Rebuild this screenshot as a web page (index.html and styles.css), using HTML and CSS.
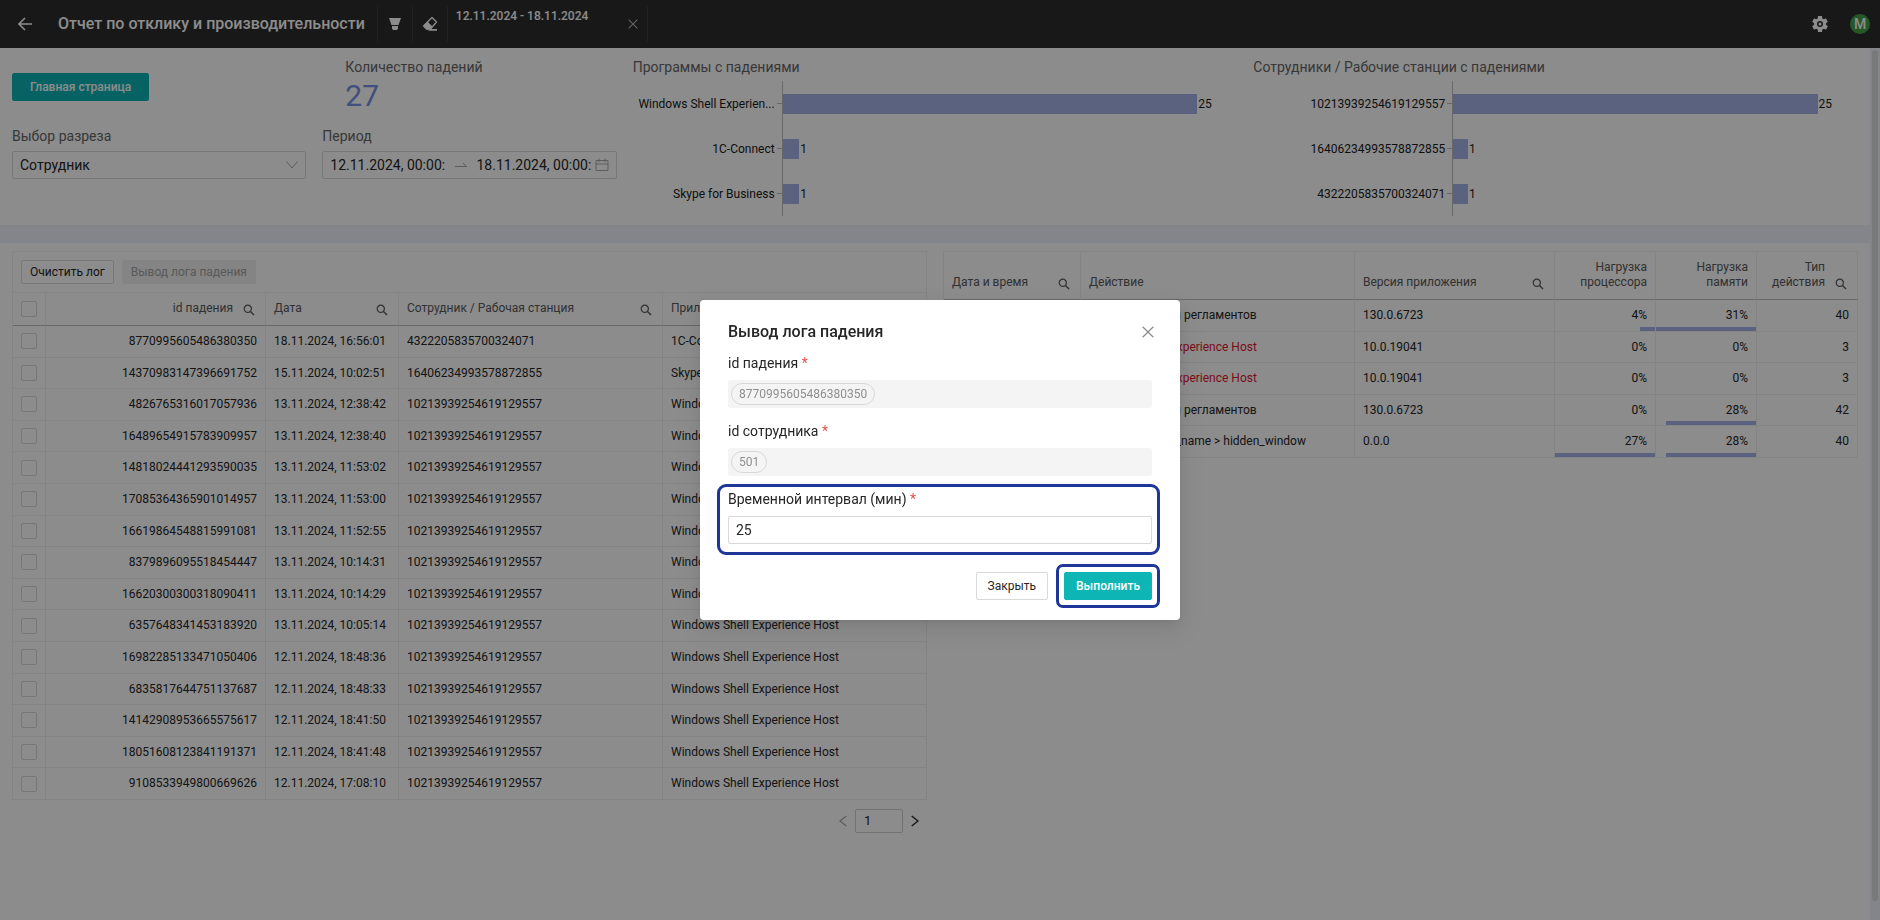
FILE: index.html
```html
<!DOCTYPE html>
<html lang="ru">
<head>
<meta charset="utf-8">
<title>Отчет по отклику и производительности</title>
<link rel="stylesheet" href="styles.css">
</head>
<body>
<svg class="sprite" aria-hidden="true">
  <symbol id="search" viewBox="0 0 12 12"><circle cx="4.8" cy="4.8" r="3.6" fill="none" stroke="currentColor" stroke-width="1.2"/><path d="M7.5 7.5 11 11" stroke="currentColor" stroke-width="1.4"/></symbol>
  <symbol id="close" viewBox="0 0 12 12"><path d="M.7.7 11.3 11.3M11.3.7.7 11.3" stroke="currentColor" stroke-width="1.3"/></symbol>
</svg>

<div class="app">
  <header class="topbar">
    <button class="icon-button back" aria-label="Назад"><svg width="14" height="14" viewBox="0 0 14 14"><path d="M7 1 1 7l6 6M1 7h13" fill="none" stroke="currentColor" stroke-width="1.6"/></svg></button>
    <h1 class="topbar-title">Отчет по отклику и производительности</h1>
    <div class="topbar-cell"><button class="icon-button" aria-label="Фильтр"><svg width="14" height="14" viewBox="0 0 14 14"><path d="M1 1h12L10.500 8h-7zM4 9h6v2.500L9 13H5l-1-1.500z" fill="currentColor"/></svg></button></div>
    <div class="topbar-cell"><button class="icon-button" aria-label="Сбросить"><svg width="16" height="16" viewBox="0 0 16 16"><path d="M10 1.500 14.500 6 8.500 13H4.500L1.500 10z" fill="none" stroke="currentColor" stroke-width="1.300" stroke-linejoin="round"/><path d="M5.500 5.500 10.500 10.500 8.500 13.500H4.500L1.500 10zM8 13h7v1.800H6z" fill="currentColor"/></svg></button></div>
    <div class="topbar-cell chip"><span class="chip-text">12.11.2024 - 18.11.2024</span><button class="icon-button chip-close" aria-label="Убрать фильтр"><svg width="10" height="10"><use href="#close"/></svg></button></div>
    <div class="topbar-right">
      <button class="icon-button" aria-label="Настройки"><svg width="20" height="20" viewBox="0 0 24 24"><path fill="currentColor" fill-rule="evenodd" d="M19.140 12.940c.04-.3.060-.61.060-.94s-.02-.64-.07-.94l2.030-1.580a.49.49 0 0 0 .12-.61l-1.920-3.320a.49.49 0 0 0-.59-.22l-2.390.96a7 7 0 0 0-1.620-.94l-.36-2.540A.48.48 0 0 0 13.920 2.400h-3.840a.48.48 0 0 0-.47.41l-.36 2.540a7 7 0 0 0-1.620.94l-2.390-.96a.48.48 0 0 0-.59.22L2.740 8.870a.48.48 0 0 0 .12.61l2.030 1.580a6 6 0 0 0 0 1.880l-2.030 1.580a.49.49 0 0 0-.12.61l1.920 3.320c.12.22.37.29.59.22l2.390-.96c.5.38 1.030.7 1.620.94l.36 2.540c.05.24.24.41.48.41h3.840c.24 0 .44-.17.47-.41l.36-2.540a7 7 0 0 0 1.620-.94l2.390.96c.22.08.47 0 .59-.22l1.920-3.320a.48.48 0 0 0-.12-.61zM12 15.600a3.600 3.600 0 1 1 0-7.200 3.600 3.600 0 0 1 0 7.200z"/><circle cx="12" cy="12" r="1.800" fill="currentColor"/></svg></button>
      <span class="avatar">M</span>
    </div>
  </header>

  <div class="body">
    <main class="content">
      <section class="panel summary">
        <div class="controls">
          <div class="home"><button class="button primary">Главная страница</button></div>
          <div class="metric"><div class="caption">Количество падений</div><div class="metric-value">27</div></div>
          <div class="control">
            <label class="caption" for="slice">Выбор разреза</label>
            <div class="box"><select id="slice" class="bare"><option>Сотрудник</option></select><svg class="chevron" width="12" height="8" viewBox="0 0 12 8"><path d="M.5.5 6 7 11.500.5" fill="none" stroke="currentColor"/></svg></div>
          </div>
          <div class="control">
            <label class="caption" for="from">Период</label>
            <div class="box">
              <input id="from" class="bare" value="12.11.2024, 00:00:00">
              <svg class="range-arrow" width="12" height="6" viewBox="0 0 12 6"><path d="M0 4.500h11.500L8 1" fill="none" stroke="currentColor"/></svg>
              <input class="bare" aria-label="Конец периода" value="18.11.2024, 00:00:00">
              <svg class="calendar" width="14" height="14" viewBox="0 0 14 14"><path d="M1 2.500h12v10H1zM1 6h12M4 .5v3.500M10 .5v3.500" fill="none" stroke="currentColor"/></svg>
            </div>
          </div>
        </div>
        <div class="chart">
          <div class="caption">Программы с падениями</div>
          <div class="bars wide">
            <span class="bar-label">Windows Shell Experien...</span><div class="bar-track"><i class="bar" style="width:91.2%"></i><span>25</span></div>
            <span class="bar-label">1C-Connect</span><div class="bar-track"><i class="bar" style="width:3.65%"></i><span>1</span></div>
            <span class="bar-label">Skype for Business</span><div class="bar-track"><i class="bar" style="width:3.65%"></i><span>1</span></div>
          </div>
        </div>
        <div class="chart">
          <div class="caption">Сотрудники / Рабочие станции с падениями</div>
          <div class="bars narrow">
            <span class="bar-label">10213939254619129557</span><div class="bar-track"><i class="bar" style="width:90%"></i><span>25</span></div>
            <span class="bar-label">16406234993578872855</span><div class="bar-track"><i class="bar" style="width:3.6%"></i><span>1</span></div>
            <span class="bar-label">4322205835700324071</span><div class="bar-track"><i class="bar" style="width:3.6%"></i><span>1</span></div>
          </div>
        </div>
      </section>

      <section class="panel logs">
        <div>
          <div class="toolbar"><button class="button small">Очистить лог</button><button class="button small" disabled>Вывод лога падения</button></div>
          <table class="grid">
            <colgroup><col class="w-check"><col class="w-id"><col class="w-date"><col><col></colgroup>
            <thead><tr>
              <th><input type="checkbox" aria-label="Выбрать все"></th>
              <th class="num"><div class="head"><span>id падения</span><svg width="12" height="12"><use href="#search"/></svg></div></th>
              <th><div class="head"><span>Дата</span><svg width="12" height="12"><use href="#search"/></svg></div></th>
              <th><div class="head"><span>Сотрудник / Рабочая станция</span><svg width="12" height="12"><use href="#search"/></svg></div></th>
              <th><div class="head"><span>Приложение</span></div></th>
            </tr></thead>
            <tbody>
              <tr><td><input type="checkbox" aria-label="Выбрать"></td><td class="num">8770995605486380350</td><td>18.11.2024, 16:56:01</td><td>4322205835700324071</td><td>1C-Connect</td></tr>
              <tr><td><input type="checkbox" aria-label="Выбрать"></td><td class="num">14370983147396691752</td><td>15.11.2024, 10:02:51</td><td>16406234993578872855</td><td>Skype for Business</td></tr>
              <tr><td><input type="checkbox" aria-label="Выбрать"></td><td class="num">4826765316017057936</td><td>13.11.2024, 12:38:42</td><td>10213939254619129557</td><td>Windows Shell Experience Host</td></tr>
              <tr><td><input type="checkbox" aria-label="Выбрать"></td><td class="num">16489654915783909957</td><td>13.11.2024, 12:38:40</td><td>10213939254619129557</td><td>Windows Shell Experience Host</td></tr>
              <tr><td><input type="checkbox" aria-label="Выбрать"></td><td class="num">14818024441293590035</td><td>13.11.2024, 11:53:02</td><td>10213939254619129557</td><td>Windows Shell Experience Host</td></tr>
              <tr><td><input type="checkbox" aria-label="Выбрать"></td><td class="num">17085364365901014957</td><td>13.11.2024, 11:53:00</td><td>10213939254619129557</td><td>Windows Shell Experience Host</td></tr>
              <tr><td><input type="checkbox" aria-label="Выбрать"></td><td class="num">16619864548815991081</td><td>13.11.2024, 11:52:55</td><td>10213939254619129557</td><td>Windows Shell Experience Host</td></tr>
              <tr><td><input type="checkbox" aria-label="Выбрать"></td><td class="num">8379896095518454447</td><td>13.11.2024, 10:14:31</td><td>10213939254619129557</td><td>Windows Shell Experience Host</td></tr>
              <tr><td><input type="checkbox" aria-label="Выбрать"></td><td class="num">16620300300318090411</td><td>13.11.2024, 10:14:29</td><td>10213939254619129557</td><td>Windows Shell Experience Host</td></tr>
              <tr><td><input type="checkbox" aria-label="Выбрать"></td><td class="num">6357648341453183920</td><td>13.11.2024, 10:05:14</td><td>10213939254619129557</td><td>Windows Shell Experience Host</td></tr>
              <tr><td><input type="checkbox" aria-label="Выбрать"></td><td class="num">16982285133471050406</td><td>12.11.2024, 18:48:36</td><td>10213939254619129557</td><td>Windows Shell Experience Host</td></tr>
              <tr><td><input type="checkbox" aria-label="Выбрать"></td><td class="num">6835817644751137687</td><td>12.11.2024, 18:48:33</td><td>10213939254619129557</td><td>Windows Shell Experience Host</td></tr>
              <tr><td><input type="checkbox" aria-label="Выбрать"></td><td class="num">14142908953665575617</td><td>12.11.2024, 18:41:50</td><td>10213939254619129557</td><td>Windows Shell Experience Host</td></tr>
              <tr><td><input type="checkbox" aria-label="Выбрать"></td><td class="num">18051608123841191371</td><td>12.11.2024, 18:41:48</td><td>10213939254619129557</td><td>Windows Shell Experience Host</td></tr>
              <tr><td><input type="checkbox" aria-label="Выбрать"></td><td class="num">9108533949800669626</td><td>12.11.2024, 17:08:10</td><td>10213939254619129557</td><td>Windows Shell Experience Host</td></tr>
            </tbody>
          </table>
          <nav class="pager">
            <button class="icon-button" aria-label="Предыдущая" disabled><svg width="8" height="12" viewBox="0 0 8 12"><path d="M7.300 1 1 6l6.300 5" fill="none" stroke="currentColor" stroke-width="1.200"/></svg></button>
            <input class="page" aria-label="Страница" value="1">
            <button class="icon-button" aria-label="Следующая"><svg width="8" height="12" viewBox="0 0 8 12"><path d="M.7 1 7 6 .7 11" fill="none" stroke="currentColor" stroke-width="1.400"/></svg></button>
          </nav>
        </div>
        <div>
          <table class="grid topped">
            <colgroup><col class="w-time"><col><col class="w-version"><col class="w-load"><col class="w-load"><col class="w-load"></colgroup>
            <thead><tr>
              <th><div class="head"><span>Дата и время</span><svg width="12" height="12"><use href="#search"/></svg></div></th>
              <th><div class="head"><span>Действие</span></div></th>
              <th><div class="head"><span>Версия приложения</span><svg width="12" height="12"><use href="#search"/></svg></div></th>
              <th class="num"><div class="head"><span>Нагрузка<br>процессора</span></div></th>
              <th class="num"><div class="head"><span>Нагрузка<br>памяти</span></div></th>
              <th class="num"><div class="head"><span>Тип<br>действия</span><svg width="12" height="12"><use href="#search"/></svg></div></th>
            </tr></thead>
            <tbody>
              <tr><td>18.11.2024, 16:56:01</td><td>Учет процесса и регламентов</td><td>130.0.6723</td><td class="num load" style="background-size:15% 4px">4%</td><td class="num load" style="background-size:100% 4px">31%</td><td class="num">40</td></tr>
              <tr><td>18.11.2024, 16:56:01</td><td class="alert">Windows Shell Experience Host</td><td>10.0.19041</td><td class="num">0%</td><td class="num">0%</td><td class="num">3</td></tr>
              <tr><td>18.11.2024, 16:56:01</td><td class="alert">Windows Shell Experience Host</td><td>10.0.19041</td><td class="num">0%</td><td class="num">0%</td><td class="num">3</td></tr>
              <tr><td>18.11.2024, 16:56:01</td><td>Учет процесса и регламентов</td><td>130.0.6723</td><td class="num">0%</td><td class="num load" style="background-size:90% 4px">28%</td><td class="num">42</td></tr>
              <tr><td>18.11.2024, 16:56:01</td><td>hidden_program_name &gt; hidden_window</td><td>0.0.0</td><td class="num load" style="background-size:100% 4px">27%</td><td class="num load" style="background-size:90% 4px">28%</td><td class="num">40</td></tr>
            </tbody>
          </table>
        </div>
      </section>
    </main>
    <div class="scrollbar"><div class="thumb"></div></div>
  </div>
</div>

<div class="mask">
  <form class="modal" role="dialog" aria-labelledby="modal-title">
    <div class="modal-head"><h2 id="modal-title">Вывод лога падения</h2><button type="button" class="icon-button modal-close" aria-label="Закрыть окно"><svg width="12" height="12"><use href="#close"/></svg></button></div>
    <div class="field"><span class="field-label">id падения <b>*</b></span><div class="tags"><span class="tag">8770995605486380350</span></div></div>
    <div class="field"><span class="field-label">id сотрудника <b>*</b></span><div class="tags"><span class="tag">501</span></div></div>
    <div class="field marked"><label class="field-label" for="interval">Временной интервал (мин) <b>*</b></label><input id="interval" class="text-input" value="25"></div>
    <div class="modal-foot"><button type="button" class="button">Закрыть</button><div class="marked-button"><button type="button" class="button primary">Выполнить</button></div></div>
  </form>
</div>
</body>
</html>
```
FILE: styles.css
```css
* { box-sizing: border-box; }
body {
  margin: 0;
  font: 12px/18px Roboto, sans-serif;
  color: #262626;
  background: #f1f3fb;
  overflow: hidden;
}
button, input, select { font: inherit; color: inherit; margin: 0; }
h1, h2 { margin: 0; font-size: 16px; font-weight: 500; line-height: 24px; }
svg { display: block; flex: none; }
.sprite { position: absolute; width: 0; height: 0; }
.app { display: flex; flex-direction: column; height: 100vh; }

.icon-button { display: flex; padding: 0; border: 0; background: none; }

/* Top bar */
.topbar {
  display: flex;
  align-items: center;
  height: 48px;
  flex: none;
  padding: 0 10px 0 18px;
  background: #2d2d2d;
  color: #fff;
}
.topbar-title { margin: 0 12px 0 26px; }
.topbar-cell {
  display: flex;
  align-items: center;
  justify-content: center;
  width: 35px;
  height: 36px;
  border-left: 1px solid #3d3d3d;
}
.chip {
  width: 201px;
  justify-content: space-between;
  padding: 0 9px 0 8px;
  border-right: 1px solid #3d3d3d;
}
.chip-text { align-self: flex-start; font-weight: 500; line-height: 20px; }
.chip-close { color: #b5b5b5; }
.topbar-right { display: flex; align-items: center; gap: 20px; margin-left: auto; }
.avatar {
  width: 20px;
  border-radius: 10px;
  background: #43a047;
  font-size: 14px;
  font-weight: 500;
  line-height: 20px;
  text-align: center;
}

/* Page */
.body { display: flex; flex: 1; min-height: 0; }
.content { display: flex; flex-direction: column; flex: 1; gap: 18px; min-width: 0; }
.scrollbar { width: 10px; padding: 2px; }
.thumb { height: 98%; width: 6px; border-radius: 3px; background: #dcdcdf; }
.panel { display: grid; column-gap: 16px; padding: 8px 12px; background: #fff; }
.summary { grid-template-columns: repeat(3, minmax(0, 1fr)); }
.logs { flex: 1; grid-template-columns: repeat(2, minmax(0, 1fr)); align-content: start; }
.caption { display: block; font-size: 14px; line-height: 22px; color: #666; }

.controls { display: grid; grid-template-columns: repeat(2, minmax(0, 1fr)); column-gap: 16px; align-content: start; }
.home { padding-top: 17px; }
.metric { height: 69px; padding-left: 23px; }
.metric-value { font-size: 30px; line-height: 36px; color: #7591e1; }
.box {
  display: flex;
  align-items: center;
  height: 28px;
  margin-top: 4px;
  padding: 0 7px;
  border: 1px solid #d9d9d9;
  border-radius: 2px;
}
.bare {
  flex: 1;
  min-width: 0;
  padding: 0;
  border: 0;
  appearance: none;
  background: none;
  font-size: 14px;
}
.chevron, .calendar, .range-arrow { color: #a8a8a8; }
.range-arrow { margin: 0 10px; }
.calendar { margin-left: 4px; }

.button {
  height: 28px;
  padding: 0 11px;
  border: 1px solid #d9d9d9;
  border-radius: 2px;
  background: #fff;
}
.primary { padding: 0 17px; border-color: #0db5b5; background: #0db5b5; color: #fff; font-weight: 500; }
.small { height: 24px; padding: 0 8px; }
.small:disabled { border-color: #f0f0f0; background: #f0f0f0; color: #a3a3a3; }

/* Bar charts */
.bars { display: grid; grid-auto-rows: 45px; margin: 3px 0 1px; color: #1a1a1a; }
.wide { grid-template-columns: 149px 1fr; }
.narrow { grid-template-columns: 199px 1fr; }
.bar-label { display: flex; align-items: center; justify-content: flex-end; gap: 2px; white-space: nowrap; }
.bar-label::after { content: ""; width: 5px; height: 1px; background: #bdbdbd; }
.bar-track { display: flex; align-items: center; gap: 1px; border-left: 1px solid #bdbdbd; }
.bar { height: 20px; background: #a4b2e8; }

/* Tables */
.toolbar {
  display: flex;
  gap: 8px;
  padding: 8px;
  border: 1px solid #f0f0f0;
  border-bottom: 0;
}
.grid {
  width: 100%;
  table-layout: fixed;
  border-spacing: 0;
  border: solid #f0f0f0;
  border-width: 1px 0 0 1px;
}
.grid th, .grid td {
  padding: 6px 8px;
  border: solid #f0f0f0;
  border-width: 0 1px 1px 0;
  line-height: 1.55;
  text-align: left;
  white-space: nowrap;
  overflow: hidden;
}
.grid th {
  padding: 7px 8px 9px;
  border-bottom-color: #bfbfbf;
  font-weight: 400;
  line-height: 15px;
  color: #595959;
  vertical-align: bottom;
}
.grid .num { text-align: right; }
.head { display: flex; justify-content: space-between; align-items: flex-end; gap: 10px; padding-right: 2px; }
.num .head { justify-content: flex-end; }
.num .head:not(:has(svg)) { padding-right: 0; }
.grid input {
  display: block;
  width: 16px;
  height: 16px;
  border: 1px solid #d9d9d9;
  border-radius: 2px;
  appearance: none;
  background: #fff;
}
.grid.topped th { padding-top: 8px; }
.grid th:has(input) { padding: 8px; }
.w-check { width: 33px; }
.w-id { width: 220px; }
.w-date { width: 133px; }
.w-time { width: 137px; }
.w-version { width: 200px; }
.w-load { width: 101px; }
.alert { color: #e0142d; }
.load { background: linear-gradient(#a4b2e8, #a4b2e8) right bottom no-repeat; background-origin: padding-box; }

.pager { display: flex; align-items: center; justify-content: flex-end; gap: 8px; padding: 9px 8px; }
.page { width: 48px; height: 24px; padding: 0 8px; border: 1px solid #cfcfcf; border-radius: 2px; background: #fff; font-size: 13px; }
.pager :disabled { color: #a8a8a8; }

/* Dialog */
.mask {
  position: fixed;
  inset: 0;
  display: flex;
  align-items: center;
  justify-content: center;
  background: rgba(0, 0, 0, .45);
}
.modal {
  width: 480px;
  padding: 20px 28px;
  border-radius: 4px;
  background: #fff;
  box-shadow: 0 3px 6px -4px rgba(0, 0, 0, .12), 0 6px 16px rgba(0, 0, 0, .08), 0 9px 28px 8px rgba(0, 0, 0, .05);
}
.modal-head { display: flex; align-items: center; justify-content: space-between; margin: 0 -2px 8px 0; }
.modal-close { color: #8c8c8c; }
.field { margin-bottom: 12px; }
.field-label { display: block; margin-bottom: 6px; font-size: 14px; line-height: 22px; }
.field-label b { font-weight: 400; color: #e8504f; }
.tags { display: flex; align-items: center; height: 28px; padding: 0 3px; border-radius: 3px; background: #f4f4f4; }
.tag { height: 22px; padding: 0 7px; border: 1px solid #d9d9d9; border-radius: 11px; line-height: 20px; color: #8f8f8f; }
.text-input { display: block; width: 100%; height: 28px; padding: 0 7px; border: 1px solid #d9d9d9; border-radius: 2px; font-size: 14px; }
.marked {
  margin: -4px -8px 9px -11px;
  padding: 1px 5px 8px 8px;
  border: 3px solid #1f3699;
  border-radius: 9px;
}
.modal-foot { display: flex; align-items: center; justify-content: flex-end; gap: 8px; margin-right: -8px; margin-bottom: -8px; }
.marked-button { display: flex; padding: 5px; border: 3px solid #1f3699; border-radius: 7px; }
.marked-button .primary { padding: 0 11px; }
```
